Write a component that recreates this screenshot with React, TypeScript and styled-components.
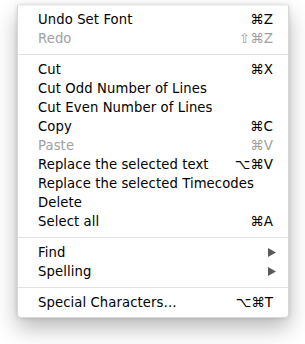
import React from "react";
import styled, { createGlobalStyle } from "styled-components";

const Global = createGlobalStyle`
  html, body { margin: 0; padding: 0; background: #ffffff; }
  body { font-family: "DejaVu Sans", "Liberation Sans", sans-serif; }
`;

const Stage = styled.div`
  width: 305px;
  height: 344px;
  padding: 5px 16px 0 17px;
  box-sizing: border-box;
`;

const Menu = styled.div`
  width: 272px;
  box-sizing: border-box;
  padding: 4px 0 5px 0;
  background: #ffffff;
  border: 1px solid #d8d8d8;
  border-top-color: #f0f0f0;
  border-radius: 0 0 4px 4px;
  box-shadow: 0 10px 22px rgba(0, 0, 0, 0.28), 0 0 4px rgba(0, 0, 0, 0.14);
  display: flex;
  flex-direction: column;
`;

const Row = styled.div<{ $disabled?: boolean }>`
  height: 19px;
  display: flex;
  align-items: center;
  justify-content: space-between;
  padding: 0 15px 0 20px;
  font-size: 13.2px;
  line-height: 19px;
  color: ${(p) => (p.$disabled ? "#a0a0a0" : "#000000")};
  white-space: nowrap;
`;

const Label = styled.span`
  letter-spacing: 0.1px;
`;

const Shortcut = styled.span`
  display: flex;
  align-items: center;
  gap: 1px;
  font-size: 13.5px;
`;

const Separator = styled.div`
  height: 12px;
  display: flex;
  align-items: center;
  &::after {
    content: "";
    flex: 1;
    height: 1px;
    background: #e3e3e3;
  }
`;

const Arrow = styled.svg`
  width: 8px;
  height: 9px;
  margin-right: -3px;
`;

type Item =
  | { sep: true }
  | { sep?: false; label: string; key?: string; disabled?: boolean; sub?: boolean };

const items: Item[] = [
  { label: "Undo Set Font", key: "⌘Z" },
  { label: "Redo", key: "⇧⌘Z", disabled: true },
  { sep: true },
  { label: "Cut", key: "⌘X" },
  { label: "Cut Odd Number of Lines" },
  { label: "Cut Even Number of Lines" },
  { label: "Copy", key: "⌘C" },
  { label: "Paste", key: "⌘V", disabled: true },
  { label: "Replace the selected text", key: "⌥⌘V" },
  { label: "Replace the selected Timecodes" },
  { label: "Delete" },
  { label: "Select all", key: "⌘A" },
  { sep: true },
  { label: "Find", sub: true },
  { label: "Spelling", sub: true },
  { sep: true },
  { label: "Special Characters…", key: "⌥⌘T" },
];

export default function App() {
  return (
    <>
      <Global />
      <Stage>
        <Menu>
          {items.map((it, i) =>
            it.sep ? (
              <Separator key={i} />
            ) : (
              <Row key={i} $disabled={it.disabled}>
                <Label>{it.label}</Label>
                {it.key && <Shortcut>{it.key}</Shortcut>}
                {it.sub && (
                  <Arrow viewBox="0 0 8 9">
                    <polygon points="0,0 8,4.5 0,9" fill="#5a5a5a" />
                  </Arrow>
                )}
              </Row>
            )
          )}
        </Menu>
      </Stage>
    </>
  );
}
